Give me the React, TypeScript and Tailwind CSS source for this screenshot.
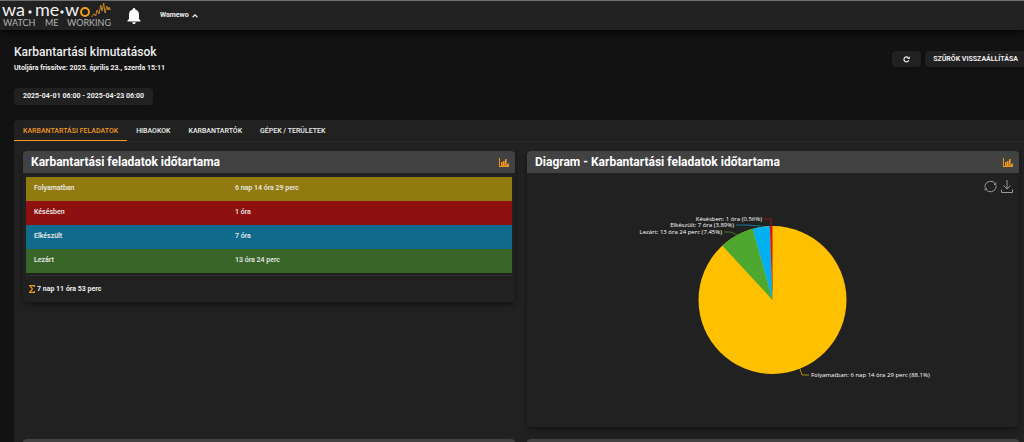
import { useState } from "react";

const tabs = ["KARBANTARTÁSI FELADATOK", "HIBAOKOK", "KARBANTARTÓK", "GÉPEK / TERÜLETEK"];

const rows = [
  { label: "Folyamatban", value: "6 nap 14 óra 29 perc", bg: "bg-[#917a10]" },
  { label: "Késésben", value: "1 óra", bg: "bg-[#8f1010]" },
  { label: "Elkészült", value: "7 óra", bg: "bg-[#106a8c]" },
  { label: "Lezárt", value: "13 óra 24 perc", bg: "bg-[#386628]" },
];

function Logo() {
  return (
    <svg className="w-[116px] h-7 shrink-0" viewBox="0 0 116 28" role="img" aria-label="wamewo">
      <g fontFamily="Lato, sans-serif" fontSize="18" fill="#f0f0f0">
        <text x="2" y="14">wa</text>
        <text x="35" y="14">me</text>
        <text x="65" y="14">w</text>
      </g>
      <g fontFamily="Lato, sans-serif" fontSize="9" fill="#b4b4b4">
        <text x="3" y="24">WATCH</text>
        <text x="45" y="24">ME</text>
        <text x="67" y="24">WORKING</text>
      </g>
      <circle cx="30" cy="10" r="1.7" fill="#f0f0f0" />
      <circle cx="62" cy="10" r="1.7" fill="#f0f0f0" />
      <circle cx="85" cy="10" r="4" fill="none" stroke="#f0a01e" strokeWidth="2" />
      <path
        d="M91.700 15L94 11.700l1.700 2.300L97 8l2 4 1.700-9 1.300 6 1.700-8L105 11l1.700-7 1.300 4 1-3 1 3 1-1"
        fill="none"
        stroke="#c8861e"
        strokeWidth="1"
      />
    </svg>
  );
}

function BarsIcon() {
  return (
    <svg className="w-[10px] h-[9px]" viewBox="0 0 10 9" fill="#f0981e" aria-hidden="true">
      <path d="M0 0h1v8h9v1H0zM2 4h1.600v4H2zM4 3h1.600v5H4zM6 1h1.600v7H6zM8.200 5.500H10V8H8.200z" />
    </svg>
  );
}

function CardHeader({ title }: { title: string }) {
  return (
    <div className="flex items-center justify-between h-[22px] pl-2 pr-[6px] bg-[#424242] rounded-t">
      <h2 className="text-[12px] leading-[14px] font-bold text-white">{title}</h2>
      <button aria-label={title}>
        <BarsIcon />
      </button>
    </div>
  );
}

function PieChart() {
  return (
    <svg className="w-full" viewBox="0 0 492 228" role="img" aria-label="Karbantartási feladatok időtartama">
      <circle cx="245.500" cy="101" r="74" fill="#ffc000" />
      <path d="M245.500 101L195.300 46.600A74 74 0 0 1 225.600 29.700z" fill="#4ea72e" />
      <path d="M245.500 101L225.600 29.700A74 74 0 0 1 242.900 27z" fill="#00b0f0" />
      <path d="M245.500 101L242.900 27A74 74 0 0 1 245.500 27z" fill="#e01010" />
      <g fill="none" strokeWidth="1">
        <path d="M237 20h7v7" stroke="#a01818" />
        <path d="M209 26h10l15 1" stroke="#14789c" />
        <path d="M197 33h7l6 3" stroke="#3c7a28" />
        <path d="M273 170l2 6h7" stroke="#b08a10" />
      </g>
      <g fontFamily="'Open Sans', sans-serif" fontSize="6" fill="#ffffff">
        <text x="235" y="22" textAnchor="end">Késésben: 1 óra (0.56%)</text>
        <text x="207" y="28" textAnchor="end">Elkészült: 7 óra (3.89%)</text>
        <text x="195" y="35" textAnchor="end">Lezárt: 13 óra 24 perc (7.45%)</text>
        <text x="284" y="178">Folyamatban: 6 nap 14 óra 29 perc (88.1%)</text>
      </g>
    </svg>
  );
}

export default function App() {
  const [activeTab, setActiveTab] = useState(0);

  return (
    <div className="h-screen overflow-hidden bg-[#121212] text-[#eeeeee] font-['Roboto',sans-serif] text-[7px]">
      <header className="flex items-center h-[30px] bg-[#212121] border-t border-[#707070] shadow-md shadow-black/60">
        <Logo />
        <button className="ml-[11px]" aria-label="Értesítések">
          <svg className="w-[14px] h-4" viewBox="0 0 14 16" fill="#ffffff" aria-hidden="true">
            <path d="M7 0c.8 0 1.300.6 1.300 1.400C10.800 2 12 4 12 6.500V11l1.500 1.500v.9H.5v-.9L2 11V6.500C2 4 3.200 2 5.700 1.400 5.700.6 6.200 0 7 0zM5.300 14.200h3.400C8.700 15.200 8 16 7 16s-1.700-.8-1.700-1.800z" />
          </svg>
        </button>
        <button className="flex items-center gap-[3px] ml-[19px] font-bold">
          Wamewo
          <svg className="w-[6px] h-[4px]" viewBox="0 0 6 4" fill="none" stroke="#eee" strokeWidth="1.200" aria-hidden="true">
            <path d="M.6 3.200L3 .9l2.400 2.300" />
          </svg>
        </button>
      </header>

      <div className="flex justify-between pl-[14px] pt-[15px]">
        <div>
          <h1 className="text-[12px] leading-[14px] font-medium">Karbantartási kimutatások</h1>
          <p className="mt-1 leading-[10px] font-bold">Utoljára frissítve: 2025. április 23., szerda 15:11</p>
          <button className="mt-[15px] h-[17px] px-[9px] rounded-sm bg-[#212121] font-bold">
            2025-04-01 06:00 - 2025-04-23 06:00
          </button>
        </div>
        <div className="flex gap-1 pt-[6px]">
          <button
            className="flex items-center justify-center w-[29px] h-4 rounded-sm bg-[#212121] shadow"
            aria-label="Frissítés"
          >
            <svg className="w-[7px] h-[7px]" viewBox="0 0 7 7" fill="none" stroke="#eee" aria-hidden="true">
              <path d="M5.800 4.300A2.500 2.500 0 1 1 5.300 1.700" strokeWidth="1.200" />
              <path d="M6.700.3v2.700H4z" fill="#eee" stroke="none" />
            </svg>
          </button>
          <button className="h-4 pl-2 pr-[6px] rounded-l-sm bg-[#212121] font-bold shadow">SZŰRŐK VISSZAÁLLÍTÁSA</button>
        </div>
      </div>

      <main className="ml-[14px] mt-[15px] min-h-full bg-[#212121] rounded-tl-sm">
        <nav className="flex h-[22px] border-b border-[#292929]">
          {tabs.map((tab, i) => (
            <button
              key={tab}
              onClick={() => setActiveTab(i)}
              className={
                i === activeTab
                  ? "px-[9px] pt-[2px] font-medium text-[#f0981e] border-b border-[#f0981e]"
                  : "px-[9px] pt-[2px] font-medium border-b border-transparent"
              }
            >
              {tab}
            </button>
          ))}
        </nav>

        <div className="grid grid-cols-2 items-start gap-3 pt-[9px] pl-[9px] pr-[5px]">
          <section className="rounded shadow-md shadow-black/30">
            <CardHeader title="Karbantartási feladatok időtartama" />
            <div className="px-[3px] pt-1">
              <table className="w-full">
                <tbody>
                  {rows.map((row) => (
                    <tr key={row.label} className={row.bg}>
                      <th scope="row" className="w-[43%] h-6 pl-2 pb-px text-left font-medium">
                        {row.label}
                      </th>
                      <td className="pb-px font-medium">{row.value}</td>
                    </tr>
                  ))}
                </tbody>
              </table>
              <p className="flex items-center gap-[2px] mt-[2px] h-[27px] px-[3px] border-t border-[#2c2c2c] font-bold">
                <svg
                  className="w-[6px] h-2"
                  viewBox="0 0 6 8"
                  fill="none"
                  stroke="#f0981e"
                  strokeWidth="1.200"
                  aria-hidden="true"
                >
                  <path d="M5.400 2V.6H.7L3.400 4 .7 7.400h4.700V6" />
                </svg>
                7 nap 11 óra 53 perc
              </p>
            </div>
          </section>

          <section className="rounded shadow-md shadow-black/30">
            <CardHeader title="Diagram - Karbantartási feladatok időtartama" />
            <div className="flex justify-end items-end gap-1 h-[20px] pr-[6px]">
              <button aria-label="Visszaállítás">
                <svg className="w-[13px] h-[13px]" viewBox="0 0 13 13" fill="none" stroke="#999" aria-hidden="true">
                  <path d="M1 7.500V5.500A5.600 5.600 0 0 1 11.300 4M12 5.500v2A5.600 5.600 0 0 1 1.700 9M11.800 2.500V4.500H10M1.200 10.500V8.500H3" />
                </svg>
              </button>
              <button aria-label="Letöltés">
                <svg className="w-3 h-[13px]" viewBox="0 0 12 13" fill="none" stroke="#999" aria-hidden="true">
                  <path d="M6 0v9M2.500 5.500L6 9l3.500-3.500M.5 9.500v3h11v-3" />
                </svg>
              </button>
            </div>
            <div className="pt-[6px]">
              <PieChart />
            </div>
          </section>

          {/* next row of cards, cut by the bottom of the window */}
          <section className="h-[22px] rounded-t bg-[#424242]" />
          <section className="h-[22px] rounded-t bg-[#424242]" />
        </div>
      </main>
    </div>
  );
}
